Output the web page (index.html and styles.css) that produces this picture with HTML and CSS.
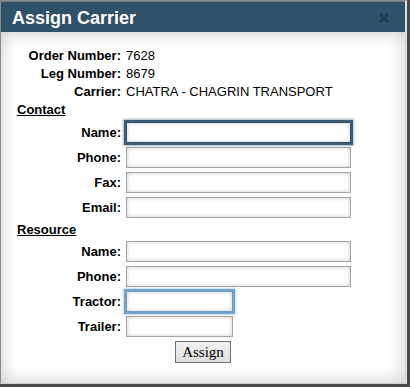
FILE: index.html
```html
<!DOCTYPE html>
<html>
<head>
<meta charset="utf-8">
<link rel="stylesheet" href="styles.css">
</head>
<body>
<div class="frame">
  <div class="dialog">
    <div class="titlebar">
      <span class="title">Assign Carrier</span>
      <span class="close"><svg width="10" height="10" viewBox="0 0 10 10"><path d="M1.5 1.5 L8.5 8.5 M8.5 1.5 L1.5 8.5" stroke="#213c52" stroke-width="2.6" stroke-linecap="round"/></svg></span>
    </div>
    <div class="body">
      <div class="info">
        <span class="lbl">Order Number:</span><span class="val">7628</span>
        <span class="lbl">Leg Number:</span><span class="val">8679</span>
        <span class="lbl">Carrier:</span><span class="val">CHATRA - CHAGRIN TRANSPORT</span>
      </div>
      <div class="section first">Contact</div>
      <div class="form">
        <label class="lbl">Name:</label><input class="inp wide focus-dark" type="text">
        <label class="lbl">Phone:</label><input class="inp wide" type="text">
        <label class="lbl">Fax:</label><input class="inp wide" type="text">
        <label class="lbl">Email:</label><input class="inp wide" type="text">
      </div>
      <div class="section">Resource</div>
      <div class="form">
        <label class="lbl">Name:</label><input class="inp wide" type="text">
        <label class="lbl">Phone:</label><input class="inp wide" type="text">
        <label class="lbl">Tractor:</label><input class="inp narrow focus-light" type="text">
        <label class="lbl">Trailer:</label><input class="inp narrow" type="text">
      </div>
      <div class="actions"><button class="btn" type="button">Assign</button></div>
    </div>
  </div>
</div>
</body>
</html>
```
FILE: styles.css
```css
html, body {
  margin: 0;
  padding: 0;
  background: #ffffff;
}
.frame {
  width: 410px;
  height: 387px;
  box-sizing: border-box;
  background: #4a4a4a;
  padding: 0 3px 3px 0;
}
.dialog {
  height: 100%;
  box-sizing: border-box;
  border: 1px solid #8a8a8a;
  border-right: 2px solid #dcdcdc;
  border-bottom: 1px solid #cfcfcf;
  display: flex;
  flex-direction: column;
  font-family: "Liberation Sans", Arial, sans-serif;
  font-size: 13px;
  color: #000;
}
.titlebar {
  height: 31px;
  box-sizing: border-box;
  border-top: 1px solid #6b8192;
  background: #2f5169;
  display: flex;
  align-items: center;
  justify-content: space-between;
  padding: 0 16px 0 11px;
}
.title {
  color: #ffffff;
  font-weight: bold;
  font-size: 18px;
  line-height: 22px;
  padding-top: 1px;
}
.close {
  display: flex;
  width: 10px;
  height: 10px;
  margin-top: 2px;
}
.body {
  flex: 1;
  background: #ffffff;
  box-shadow: inset 0 0 18px rgba(0, 0, 0, 0.22);
  padding-top: 15px;
}
.info {
  display: grid;
  grid-template-columns: 120px 1fr;
  column-gap: 5px;
  grid-auto-rows: 18px;
  line-height: 18px;
}
.lbl {
  font-weight: bold;
  text-align: right;
  align-self: center;
  white-space: nowrap;
}
.val {
  white-space: nowrap;
}
.section {
  font-weight: bold;
  text-decoration: underline;
  line-height: 17px;
  padding-left: 16px;
  margin: 3px 0 3px 0;
}
.section.first {
  margin: 0 0 4px 0;
}
.form {
  display: grid;
  grid-template-columns: 120px 1fr;
  column-gap: 5px;
  row-gap: 4px;
  grid-auto-rows: 21px;
}
.inp {
  height: 21px;
  box-sizing: border-box;
  border: 1px solid #a6a6a6;
  background: #ffffff;
  box-shadow: inset 0 0 4px rgba(0, 0, 0, 0.2);
  margin: 0;
  padding: 0 3px;
  font: inherit;
  outline: none;
}
.inp.wide {
  width: 225px;
}
.inp.narrow {
  width: 107px;
}
.inp.focus-dark {
  border-color: #334f66;
  box-shadow: 0 0 0 2px #3f5d75, 0 0 2px 3px rgba(63, 93, 117, 0.45), inset 0 0 4px rgba(0, 0, 0, 0.2);
}
.inp.focus-light {
  border-color: #6b9cc4;
  box-shadow: 0 0 0 2px #74a3c9, 0 0 2px 3px rgba(116, 163, 201, 0.4), inset 0 0 4px rgba(0, 0, 0, 0.2);
}
.actions {
  display: flex;
  justify-content: center;
  margin-top: 4px;
}
.btn {
  width: 56px;
  height: 22px;
  box-sizing: border-box;
  border: 1px solid #707070;
  background: linear-gradient(#f2f2f2, #dedede);
  font-family: "Liberation Serif", "Times New Roman", serif;
  font-size: 15px;
  color: #000;
  padding: 0;
  margin: 0;
  line-height: 20px;
}
```
